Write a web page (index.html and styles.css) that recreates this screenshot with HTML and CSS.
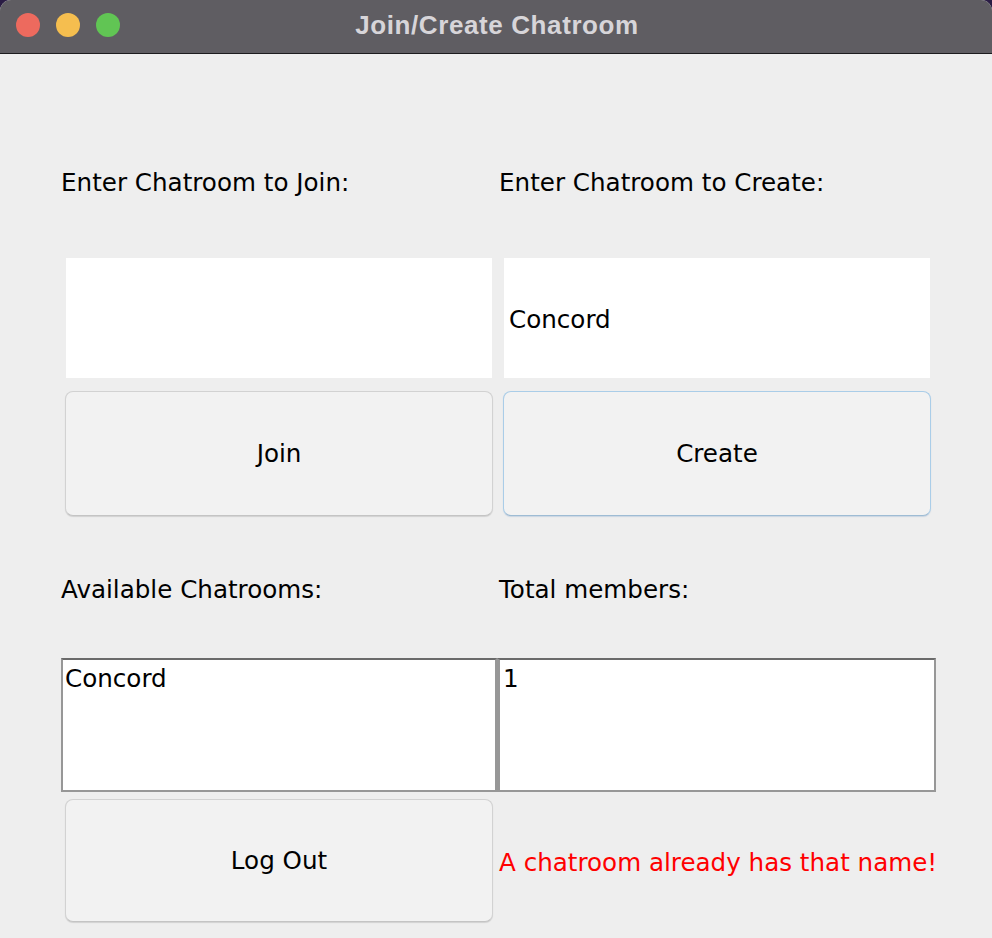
FILE: index.html
```html
<!DOCTYPE html>
<html>
<head>
<meta charset="utf-8">
<title>Join/Create Chatroom</title>
<link rel="stylesheet" href="styles.css">
</head>
<body>
<div class="window">
  <div class="titlebar">
    <div class="lights">
      <span class="light red"></span>
      <span class="light yellow"></span>
      <span class="light green"></span>
    </div>
    <div class="title">Join/Create Chatroom</div>
  </div>
  <div class="content">
    <div class="row row-label1">
      <div class="label">Enter Chatroom to Join:</div>
      <div class="label right">Enter Chatroom to Create:</div>
    </div>
    <div class="row row-field">
      <div class="field"></div>
      <div class="field right">Concord</div>
    </div>
    <div class="row row-btn">
      <div class="btn">Join</div>
      <div class="btn right focus">Create</div>
    </div>
    <div class="row row-label2">
      <div class="label">Available Chatrooms:</div>
      <div class="label right">Total members:</div>
    </div>
    <div class="row row-list">
      <div class="list">Concord</div>
      <div class="list right">1</div>
    </div>
    <div class="row row-bottom">
      <div class="btn">Log Out</div>
      <div class="error">A chatroom already has that name!</div>
    </div>
  </div>
</div>
</body>
</html>
```
FILE: styles.css
```css
html, body {
  margin: 0;
  padding: 0;
  background: #2a1c44;
}
body {
  width: 992px;
  height: 938px;
  overflow: hidden;
}
.window {
  width: 992px;
  height: 938px;
  background: #eeeeee;
  border-radius: 11px 11px 0 0;
  overflow: hidden;
  font-family: "DejaVu Sans", "Liberation Sans", sans-serif;
  font-size: 24.6px;
  color: #000;
}
.titlebar {
  height: 53px;
  background: #5f5d62;
  border-bottom: 1px solid #1c1c1e;
  display: flex;
  align-items: center;
  justify-content: center;
  position: relative;
}
.lights {
  position: absolute;
  left: 16px;
  top: 13px;
  display: flex;
  gap: 16px;
}
.light {
  width: 24px;
  height: 24px;
  border-radius: 50%;
  display: block;
}
.light.red { background: #ed6a5e; }
.light.yellow { background: #f5be4f; }
.light.green { background: #61c554; }
.title {
  font-family: "Liberation Sans", Arial, sans-serif;
  font-weight: bold;
  font-size: 26px;
  letter-spacing: 0.6px;
  color: #d7d5d9;
  margin-left: 2px;
  margin-top: -3px;
}
.content {
  padding-left: 61px;
  display: flex;
  flex-direction: column;
}
.row {
  display: grid;
  grid-template-columns: 436px 439px;
}
.row-label1 { height: 120px; margin-top: 69px; align-items: center; }
.row-field { height: 120px; margin-top: 15px; }
.row-btn { height: 125px; margin-top: 13px; }
.row-label2 { height: 120px; margin-top: 14px; align-items: center; }
.row-list { height: 134px; margin-top: 8px; }
.row-bottom { height: 123px; margin-top: 7px; }

.label { margin-top: -1px; }
.label.right { margin-left: 2px; }

.field {
  background: #ffffff;
  margin: 0 5px;
  display: flex;
  align-items: center;
  padding-left: 5px;
  padding-top: 2px;
}
.field.right {
  margin: 0 6px 0 7px;
}

.btn {
  background: #f2f2f2;
  border: 1px solid #d2d2d2;
  border-bottom-color: #c4c4c4;
  border-radius: 8px;
  box-shadow: 0 1px 1px rgba(0, 0, 0, 0.12);
  margin: 0 4px 0 4px;
  display: flex;
  align-items: center;
  justify-content: center;
}
.btn.right {
  margin: 0 5px 0 6px;
}
.btn.focus {
  border-color: #aacde8;
  border-bottom-color: #9ebcd4;
  box-shadow: 0 1px 1px rgba(90, 140, 190, 0.25);
}

.list {
  background: #ffffff;
  border: 2px solid #979797;
  border-top-color: #6a6a6a;
  padding: 2px 2px;
  line-height: 34px;
}
.list.right {
  border-left-width: 3px;
  padding-left: 3px;
}

.error {
  color: #ff0000;
  display: flex;
  align-items: center;
  margin-left: 2px;
  margin-top: 4px;
  white-space: nowrap;
}
```
